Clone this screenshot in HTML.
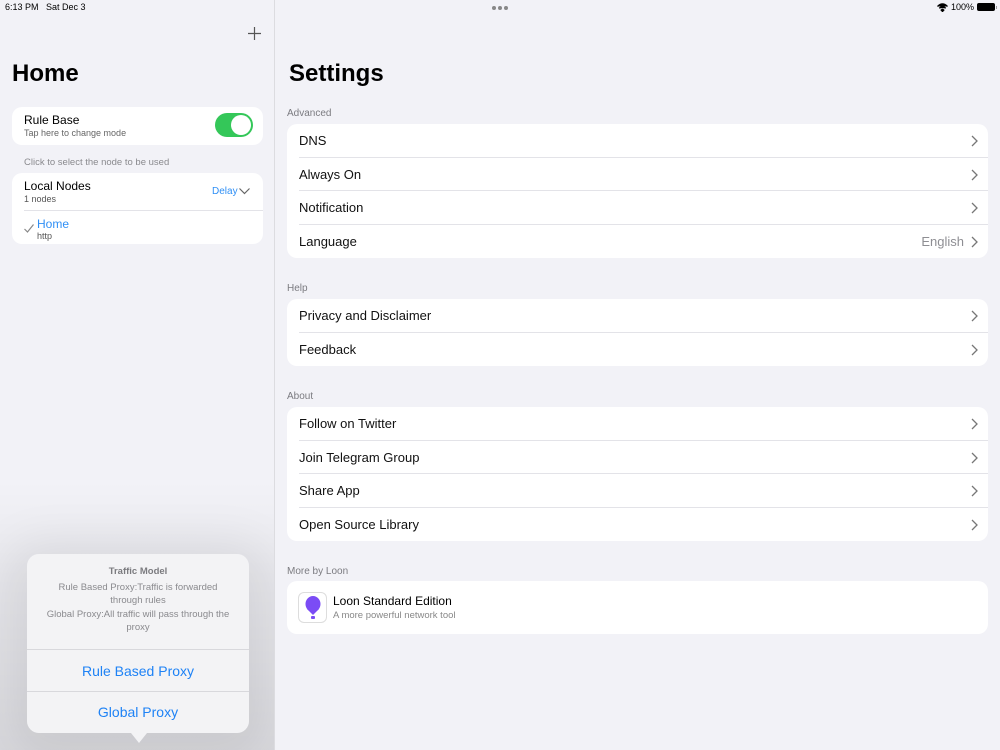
<!DOCTYPE html>
<html><head><meta charset="utf-8"><style>
*{margin:0;padding:0;box-sizing:border-box}
body{width:1000px;height:750px;overflow:hidden;background:#f2f2f7;font-family:"Liberation Sans",sans-serif;position:relative;color:#000}
.abs{position:absolute}
#side{position:absolute;left:0;top:0;width:275px;height:750px;background:#f2f2f7;border-right:1px solid #dcdce0;overflow:hidden}
.card{position:absolute;background:#fff;border-radius:10px;overflow:hidden}
.row{position:relative;height:33.5px;border-bottom:1px solid #e3e3e8;margin-left:12px;font-size:13px;line-height:33px;color:#111}
.row:last-child{border-bottom:none}
.chev{position:absolute;right:10px;top:11px}
.hdr{position:absolute;left:287px;font-size:10px;color:#7b7b80}
</style></head><body>
<div id="side">
  <div class="abs" style="left:0;top:0;width:275px;height:750px;background:linear-gradient(to bottom,rgba(0,0,0,0) 0,rgba(0,0,0,0) 480px,rgba(0,0,0,0.05) 600px,rgba(0,0,0,0.1) 750px)"></div>
  <div class="abs" style="left:5px;top:2px;font-size:9px;color:#000">6:13 PM&nbsp;&nbsp;&nbsp;Sat Dec 3</div>
  <svg class="abs" style="left:248px;top:27px" width="13" height="13"><path d="M6.5 0V13M0 6.5H13" stroke="#555" stroke-width="1.2"/></svg>
  <div class="abs" style="left:12px;top:60px;font-size:24px;font-weight:bold">Home</div>
  <div class="card" style="left:12px;top:107px;width:251px;height:38px">
    <div class="abs" style="left:12px;top:6px;font-size:12px">Rule Base</div>
    <div class="abs" style="left:12px;top:21px;font-size:9px;color:#666">Tap here to change mode</div>
    <div class="abs" style="left:203px;top:6px;width:38px;height:24px;border-radius:12px;background:#34c759"><div class="abs" style="left:16px;top:2px;width:20px;height:20px;border-radius:10px;background:#fff"></div></div>
  </div>
  <div class="abs" style="left:24px;top:157px;font-size:9.5px;color:#8a8a8e">Click to select the node to be used</div>
  <div class="card" style="left:12px;top:173px;width:251px;height:71px">
    <div class="abs" style="left:12px;top:6px;font-size:12px">Local Nodes</div>
    <div class="abs" style="left:12px;top:21px;font-size:9px;color:#555">1 nodes</div>
    <div class="abs" style="left:200px;top:13px;font-size:10px;color:#2f8ff5">Delay</div>
    <svg class="abs" style="left:227px;top:15px" width="11" height="7"><path d="M0.5 0.5L5.5 5.5L10.5 0.5" stroke="#666" stroke-width="1.2" fill="none"/></svg>
    <div class="abs" style="left:12px;top:37px;width:239px;height:1px;background:#e3e3e8"></div>
    <svg class="abs" style="left:12px;top:51px" width="10" height="9"><path d="M0.5 5L3.5 8L9.5 0.5" stroke="#888" stroke-width="1.2" fill="none"/></svg>
    <div class="abs" style="left:25px;top:44px;font-size:12px;color:#2f8ff5">Home</div>
    <div class="abs" style="left:25px;top:58px;font-size:9px;color:#555">http</div>
  </div>
  <div class="abs" style="left:27px;top:554px;width:222px;height:179px;border-radius:12px;box-shadow:0 10px 50px 20px rgba(0,0,0,0.08)"></div>
  <div class="abs" style="left:27px;top:554px;width:222px;height:179px;border-radius:12px;background:#f3f3f5;overflow:hidden;text-align:center">
    <div style="margin-top:12px;font-size:9.5px;font-weight:bold;color:#7b7b7f">Traffic Model</div>
    <div style="margin-top:4px;font-size:9.5px;line-height:13.3px;color:#8a8a8e;padding:0 18px">Rule Based Proxy:Traffic is forwarded through rules<br>Global Proxy:All traffic will pass through the proxy</div>
    <div class="abs" style="left:0;top:95px;width:222px;height:1px;background:#d8d8dc"></div>
    <div class="abs" style="left:0;top:109px;width:222px;font-size:14px;color:#1e82f5">Rule Based Proxy</div>
    <div class="abs" style="left:0;top:137px;width:222px;height:1px;background:#d8d8dc"></div>
    <div class="abs" style="left:0;top:150px;width:222px;font-size:14px;color:#1e82f5">Global Proxy</div>
  </div>
  <div class="abs" style="left:131px;top:733px;width:0;height:0;border-left:8px solid transparent;border-right:8px solid transparent;border-top:10px solid #f3f3f5"></div>
</div>
<div class="abs" style="left:492px;top:6px;width:4px;height:4px;border-radius:2px;background:#888"></div>
<div class="abs" style="left:498px;top:6px;width:4px;height:4px;border-radius:2px;background:#888"></div>
<div class="abs" style="left:504px;top:6px;width:4px;height:4px;border-radius:2px;background:#888"></div>
<svg class="abs" style="left:937px;top:3px" width="11" height="9"><path d="M0.5 3.5Q5.5 -1.5 10.5 3.5M2.3 5.3Q5.5 2 8.7 5.3M4.2 7.1Q5.5 5.7 6.8 7.1L5.5 8.5Z" stroke="#000" stroke-width="1.3" fill="#000"/></svg>
<div class="abs" style="left:951px;top:2px;font-size:9px">100%</div>
<div class="abs" style="left:977px;top:3px;width:18px;height:8px;border-radius:2px;background:#000"></div>
<div class="abs" style="left:995.5px;top:5.5px;width:1.5px;height:3px;background:#999"></div>
<div class="abs" style="left:289px;top:60px;font-size:24px;font-weight:bold">Settings</div>

<div class="hdr" style="top:108px">Advanced</div>
<div class="card" style="left:287px;top:124px;width:701px;height:134px">
  <div class="row">DNS<svg class="chev" width="7" height="12"><path d="M1 1L6 6L1 11" stroke="#777" stroke-width="1.3" fill="none"/></svg></div>
  <div class="row">Always On<svg class="chev" width="7" height="12"><path d="M1 1L6 6L1 11" stroke="#777" stroke-width="1.3" fill="none"/></svg></div>
  <div class="row">Notification<svg class="chev" width="7" height="12"><path d="M1 1L6 6L1 11" stroke="#777" stroke-width="1.3" fill="none"/></svg></div>
  <div class="row">Language<span style="position:absolute;right:24px;color:#8e8e93">English</span><svg class="chev" width="7" height="12"><path d="M1 1L6 6L1 11" stroke="#777" stroke-width="1.3" fill="none"/></svg></div>
</div>
<div class="hdr" style="top:283px">Help</div>
<div class="card" style="left:287px;top:299px;width:701px;height:67px">
  <div class="row">Privacy and Disclaimer<svg class="chev" width="7" height="12"><path d="M1 1L6 6L1 11" stroke="#777" stroke-width="1.3" fill="none"/></svg></div>
  <div class="row">Feedback<svg class="chev" width="7" height="12"><path d="M1 1L6 6L1 11" stroke="#777" stroke-width="1.3" fill="none"/></svg></div>
</div>
<div class="hdr" style="top:391px">About</div>
<div class="card" style="left:287px;top:407px;width:701px;height:134px">
  <div class="row">Follow on Twitter<svg class="chev" width="7" height="12"><path d="M1 1L6 6L1 11" stroke="#777" stroke-width="1.3" fill="none"/></svg></div>
  <div class="row">Join Telegram Group<svg class="chev" width="7" height="12"><path d="M1 1L6 6L1 11" stroke="#777" stroke-width="1.3" fill="none"/></svg></div>
  <div class="row">Share App<svg class="chev" width="7" height="12"><path d="M1 1L6 6L1 11" stroke="#777" stroke-width="1.3" fill="none"/></svg></div>
  <div class="row">Open Source Library<svg class="chev" width="7" height="12"><path d="M1 1L6 6L1 11" stroke="#777" stroke-width="1.3" fill="none"/></svg></div>
</div>
<div class="hdr" style="top:566px">More by Loon</div>
<div class="card" style="left:287px;top:581px;width:701px;height:53px">
  <div class="abs" style="left:11px;top:11px;width:29px;height:31px;border:1px solid #ddd;border-radius:6px;background:#fff"></div>
  <svg class="abs" style="left:17px;top:15px" width="18" height="24"><ellipse cx="9" cy="8" rx="7.5" ry="8" fill="#7b4cf5"/><path d="M3 13L9 19L15 13Z" fill="#7b4cf5"/><rect x="7" y="20" width="4" height="3" rx="1" fill="#7b4cf5"/></svg>
  <div class="abs" style="left:46px;top:13px;font-size:12px">Loon Standard Edition</div>
  <div class="abs" style="left:46px;top:29px;font-size:9.5px;color:#888">A more powerful network tool</div>
</div>
</body></html>
